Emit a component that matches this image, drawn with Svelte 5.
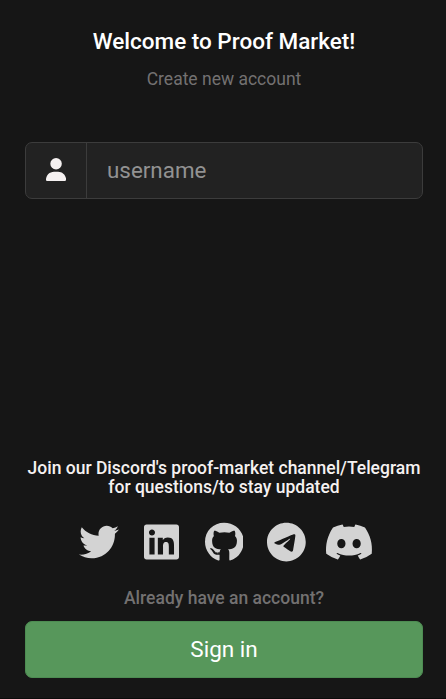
<script>
  const socials = [
    {
      name: 'Twitter',
      width: 512,
      path: 'M459.37 151.716c.325 4.548.325 9.097.325 13.645 0 138.72-105.583 298.558-298.558 298.558-59.452 0-114.68-17.219-161.137-47.106 8.447.974 16.568 1.299 25.34 1.299 49.055 0 94.213-16.568 130.274-44.832-46.132-.975-84.792-31.188-98.112-72.772 6.498.974 12.995 1.624 19.818 1.624 9.421 0 18.843-1.3 27.614-3.573-48.081-9.747-84.143-51.98-84.143-102.985v-1.299c13.969 7.797 30.214 12.67 47.431 13.319-28.264-18.843-46.781-51.005-46.781-87.391 0-19.492 5.197-37.36 14.294-52.954 51.655 63.675 129.3 105.258 216.365 109.807-1.624-7.797-2.599-15.918-2.599-24.04 0-57.828 46.782-104.934 104.934-104.934 30.213 0 57.502 12.67 76.67 33.137 23.715-4.548 46.456-13.32 66.599-25.34-7.798 24.366-24.366 44.833-46.132 57.827 21.117-2.273 41.584-8.122 60.426-16.243-14.292 20.791-32.161 39.308-52.628 54.253z'
    },
    {
      name: 'LinkedIn',
      width: 448,
      path: 'M416 32H31.9C14.3 32 0 46.5 0 64.3v383.4C0 465.5 14.3 480 31.9 480H416c17.6 0 32-14.5 32-32.3V64.3c0-17.8-14.4-32.3-32-32.3zM135.4 416H69V202.2h66.5V416zm-33.2-243c-21.3 0-38.5-17.3-38.5-38.5S80.9 96 102.2 96c21.2 0 38.5 17.3 38.5 38.5 0 21.3-17.2 38.5-38.5 38.5zm282.1 243h-66.4V312c0-24.8-.5-56.7-34.5-56.7-34.6 0-39.9 27-39.9 54.9V416h-66.4V202.2h63.7v29.2h.9c8.9-16.8 30.6-34.5 62.9-34.5 67.2 0 79.7 44.3 79.7 101.9V416z'
    },
    {
      name: 'GitHub',
      width: 496,
      path: 'M165.9 397.4c0 2-2.3 3.6-5.2 3.6-3.3.3-5.6-1.3-5.6-3.6 0-2 2.3-3.6 5.2-3.6 3-.3 5.6 1.3 5.6 3.6zm-31.1-4.5c-.7 2 1.3 4.3 4.3 4.9 2.6 1 5.6 0 6.2-2s-1.3-4.3-4.3-5.2c-2.6-.7-5.5.3-6.2 2.3zm44.2-1.7c-2.9.7-4.9 2.6-4.6 4.9.3 2 2.9 3.3 5.9 2.6 2.9-.7 4.9-2.6 4.6-4.6-.3-1.9-3-3.2-5.9-2.9zM244.8 8C106.1 8 0 113.3 0 252c0 110.9 69.8 205.8 169.5 239.2 12.8 2.3 17.3-5.6 17.3-12.1 0-6.2-.3-40.4-.3-61.4 0 0-70 15-84.7-29.8 0 0-11.4-29.1-27.8-36.6 0 0-22.9-15.7 1.6-15.4 0 0 24.9 2 38.6 25.8 21.9 38.6 58.6 27.5 72.9 20.9 2.3-16 8.8-27.1 16-33.7-55.9-6.2-112.3-14.3-112.3-110.5 0-27.5 7.6-41.3 23.6-58.9-2.6-6.5-11.1-33.3 2.6-67.9 20.9-6.5 69 27 69 27 20-5.6 41.5-8.5 62.8-8.5s42.8 2.9 62.8 8.5c0 0 48.1-33.6 69-27 13.7 34.7 5.2 61.4 2.6 67.9 16 17.7 25.8 31.5 25.8 58.9 0 96.5-58.9 104.2-114.8 110.5 9.2 7.9 17 22.9 17 46.4 0 33.7-.3 75.4-.3 83.6 0 6.5 4.6 14.4 17.3 12.1C428.2 457.8 496 362.9 496 252 496 113.3 383.5 8 244.8 8z'
    },
    {
      name: 'Telegram',
      width: 496,
      path: 'M248,8C111.033,8,0,119.033,0,256S111.033,504,248,504,496,392.967,496,256,384.967,8,248,8ZM362.952,176.66c-3.732,39.215-19.881,134.378-28.1,178.3-3.476,18.584-10.322,24.816-16.948,25.425-14.4,1.326-25.338-9.517-39.287-18.661-21.827-14.308-34.158-23.215-55.346-37.177-24.485-16.135-8.612-25,5.342-39.5,3.652-3.793,67.107-61.51,68.335-66.746.153-.655.3-3.1-1.154-4.384s-3.59-.849-5.135-.5q-3.283.746-104.608,69.142-14.845,10.194-26.894,9.934c-8.855-.191-25.888-5.006-38.551-9.123-15.531-5.048-27.875-7.717-26.8-16.291q.84-6.7,18.45-13.7,108.446-47.248,144.628-62.3c68.872-28.647,83.183-33.623,92.511-33.789,2.052-.034,6.639.474,9.61,2.885a10.452,10.452,0,0,1,3.53,6.716A43.765,43.765,0,0,1,362.952,176.66Z'
    },
    {
      name: 'Discord',
      width: 640,
      path: 'M524.531,69.836a1.5,1.5,0,0,0-.764-.7A485.065,485.065,0,0,0,404.081,32.03a1.816,1.816,0,0,0-1.923.91,337.461,337.461,0,0,0-14.9,30.6,447.848,447.848,0,0,0-134.426,0,309.541,309.541,0,0,0-15.135-30.6,1.89,1.89,0,0,0-1.924-.91A483.689,483.689,0,0,0,116.085,69.137a1.712,1.712,0,0,0-.788.676C39.068,183.651,18.186,294.69,28.43,404.354a2.016,2.016,0,0,0,.765,1.375A487.666,487.666,0,0,0,176.02,479.918a1.9,1.9,0,0,0,2.063-.676A348.2,348.2,0,0,0,208.12,430.4a1.86,1.86,0,0,0-1.019-2.588,321.173,321.173,0,0,1-45.868-21.853,1.885,1.885,0,0,1-.185-3.126c3.082-2.309,6.166-4.711,9.109-7.137a1.819,1.819,0,0,1,1.9-.256c96.229,43.917,200.41,43.917,295.5,0a1.812,1.812,0,0,1,1.924.233c2.944,2.426,6.027,4.851,9.132,7.16a1.884,1.884,0,0,1-.162,3.126,301.407,301.407,0,0,1-45.89,21.83,1.875,1.875,0,0,0-1,2.611,391.055,391.055,0,0,0,30.014,48.815,1.864,1.864,0,0,0,2.063.7A486.048,486.048,0,0,0,610.7,405.729a1.882,1.882,0,0,0,.765-1.352C623.729,277.594,590.933,167.465,524.531,69.836ZM222.491,337.58c-28.972,0-52.844-26.587-52.844-59.239S193.056,219.1,222.491,219.1c29.665,0,53.306,26.82,52.843,59.239C275.334,310.993,251.924,337.58,222.491,337.58Zm195.38,0c-28.971,0-52.843-26.587-52.843-59.239S388.437,219.1,417.871,219.1c29.667,0,53.307,26.82,52.844,59.239C470.715,310.993,447.538,337.58,417.871,337.58Z'
    }
  ];
</script>

<main>
  <h1>Welcome to Proof Market!</h1>
  <p class="subtitle">Create new account</p>

  <label class="field">
    <span class="addon">
      <svg viewBox="0 0 448 512" aria-hidden="true">
        <path d="M224 256A128 128 0 1 0 224 0a128 128 0 1 0 0 256zm-45.7 48C79.8 304 0 383.8 0 482.3C0 498.7 13.3 512 29.7 512H418.3c16.4 0 29.7-13.3 29.7-29.7C448 383.8 368.2 304 269.7 304H178.3z" />
      </svg>
    </span>
    <input type="text" placeholder="username" />
  </label>

  <footer>
    <p class="join">Join our Discord's proof-market channel/Telegram<br />for questions/to stay updated</p>
    <nav>
      {#each socials as s}
        <a href="#{s.name}" aria-label={s.name}>
          <svg viewBox="0 0 {s.width} 512"><path d={s.path} /></svg>
        </a>
      {/each}
    </nav>
    <p class="already">Already have an account?</p>
    <button type="button">Sign in</button>
  </footer>
</main>

<style>
  :global(body) {
    background: #161616;
  }
  main {
    box-sizing: border-box;
    height: 699px;
    padding: 27px 23px 20px 25px;
    border-bottom: 1px solid #0b0b0b;
    display: flex;
    flex-direction: column;
    background: #161616;
    font-family: Roboto, sans-serif;
    text-align: center;
  }
  h1,
  p {
    margin: 0;
  }
  h1 {
    font-size: 22.5px;
    line-height: 28px;
    font-weight: 500;
    color: #fff;
  }
  .subtitle {
    margin-top: 13px;
    font-size: 17.5px;
    line-height: 22px;
    color: #737171;
  }
  .field {
    box-sizing: border-box;
    margin-top: 52px;
    height: 57px;
    display: flex;
    border: 1px solid #3c3c3c;
    border-radius: 7px;
    background: #222;
    overflow: hidden;
  }
  .addon {
    width: 60px;
    flex: none;
    display: flex;
    align-items: center;
    justify-content: center;
    padding-bottom: 2px;
    border-right: 1px solid #3c3c3c;
  }
  .addon svg {
    height: 23px;
    fill: #f5f1f1;
  }
  input {
    flex: 1;
    min-width: 0;
    padding: 0 20px 2px;
    border: 0;
    outline: 0;
    background: transparent;
    color: #fff;
    font: 400 22.4px Roboto, sans-serif;
  }
  input::placeholder {
    color: #929292;
    opacity: 1;
  }
  footer {
    margin-top: auto;
    display: flex;
    flex-direction: column;
  }
  .join {
    font-size: 17.5px;
    line-height: 19px;
    font-weight: 500;
    color: #f5f1f1;
    white-space: nowrap;
  }
  nav {
    margin-top: 25px;
    display: flex;
    justify-content: center;
  }
  nav a {
    width: 62.5px;
    display: flex;
    justify-content: center;
  }
  nav svg {
    height: 40px;
    fill: #d3d3d3;
  }
  .already {
    margin-top: 25px;
    font-size: 17.5px;
    line-height: 22px;
    font-weight: 500;
    color: #737171;
  }
  button {
    margin-top: 12px;
    height: 57px;
    padding: 0 0 2px;
    border: 1px solid #4d8c52;
    border-radius: 7px;
    background: #57975b;
    color: #fff;
    font: 400 22.5px Roboto, sans-serif;
  }
</style>
